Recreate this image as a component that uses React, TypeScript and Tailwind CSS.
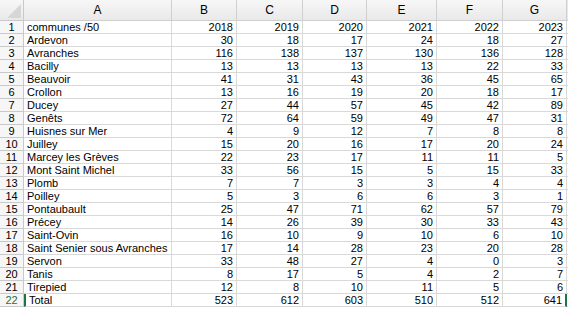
import React from 'react';

const cols = ['A', 'B', 'C', 'D', 'E', 'F', 'G'];

const rows: [string, ...(string | number)[]][] = [
  ['communes /50', 2018, 2019, 2020, 2021, 2022, 2023],
  ['Ardevon', 30, 18, 17, 24, 18, 27],
  ['Avranches', 116, 138, 137, 130, 136, 128],
  ['Bacilly', 13, 13, 13, 13, 22, 33],
  ['Beauvoir', 41, 31, 43, 36, 45, 65],
  ['Crollon', 13, 16, 19, 20, 18, 17],
  ['Ducey', 27, 44, 57, 45, 42, 89],
  ['Genêts', 72, 64, 59, 49, 47, 31],
  ['Huisnes sur Mer', 4, 9, 12, 7, 8, 8],
  ['Juilley', 15, 20, 16, 17, 20, 24],
  ['Marcey les Grèves', 22, 23, 17, 11, 11, 5],
  ['Mont Saint Michel', 33, 56, 15, 5, 15, 33],
  ['Plomb', 7, 7, 3, 3, 4, 4],
  ['Poilley', 5, 3, 6, 6, 3, 1],
  ['Pontaubault', 25, 47, 71, 62, 57, 79],
  ['Précey', 14, 26, 39, 30, 33, 43],
  ['Saint-Ovin', 16, 10, 9, 10, 6, 10],
  ['Saint Senier sous Avranches', 17, 14, 28, 23, 20, 28],
  ['Servon', 33, 48, 27, 4, 0, 3],
  ['Tanis', 8, 17, 5, 4, 2, 7],
  ['Tirepied', 12, 8, 10, 11, 5, 6],
  ['Total', 523, 612, 603, 510, 512, 641],
];

export default function App() {
  return (
    <div className="w-[568px] h-[310px] overflow-hidden bg-white text-black font-['Liberation_Sans',Arial,sans-serif]">
      <div className="grid grid-cols-[24px_148px_65px_66px_64px_70px_66px_64px_1px]">
        {/* header row */}
        <div className="relative h-[21px] bg-gradient-to-b from-[#f7f7f7] to-[#e9e9e9] border-r border-b border-[#c9c9c9] overflow-hidden">
          <svg className="absolute right-[2px] bottom-[2px]" width="14" height="14" viewBox="0 0 14 14">
            <polygon points="14,0 14,14 0,14" fill="#d6d6d6" />
          </svg>
        </div>
        {cols.map((c) => (
          <div
            key={c}
            className="h-[21px] flex items-center justify-center text-[12px] bg-gradient-to-b from-[#f7f7f7] to-[#e9e9e9] border-r border-b border-[#d0d0d0]"
          >
            {c}
          </div>
        ))}
        <div className="h-[21px] bg-[#e9e9e9] border-b border-[#d0d0d0]" />

        {rows.map((r, i) => {
          const last = i === rows.length - 1;
          return (
            <React.Fragment key={i}>
              <div
                className={`h-[13px] flex items-center justify-center text-[11px] leading-none bg-[#f6f6f6] border-r border-b border-[#c9c9c9] ${last ? 'text-[#217346]' : ''}`}
              >
                {i + 1}
              </div>
              {r.map((v, j) => (
                <div
                  key={j}
                  className={`h-[13px] flex items-center text-[11px] leading-none border-r border-b border-[#d9d9d9] whitespace-nowrap overflow-hidden ${
                    j === 0 ? 'pl-[3px]' : 'justify-end pr-[3px]'
                  } ${last && j === 0 ? 'border-l-2 border-l-[#217346] pl-[1px]' : ''} ${
                    last && j === 6 ? 'border-r-2 border-r-[#217346]' : ''
                  }`}
                >
                  {v}
                </div>
              ))}
              <div className="h-[13px] border-b border-[#d9d9d9]" />
            </React.Fragment>
          );
        })}
      </div>
    </div>
  );
}
